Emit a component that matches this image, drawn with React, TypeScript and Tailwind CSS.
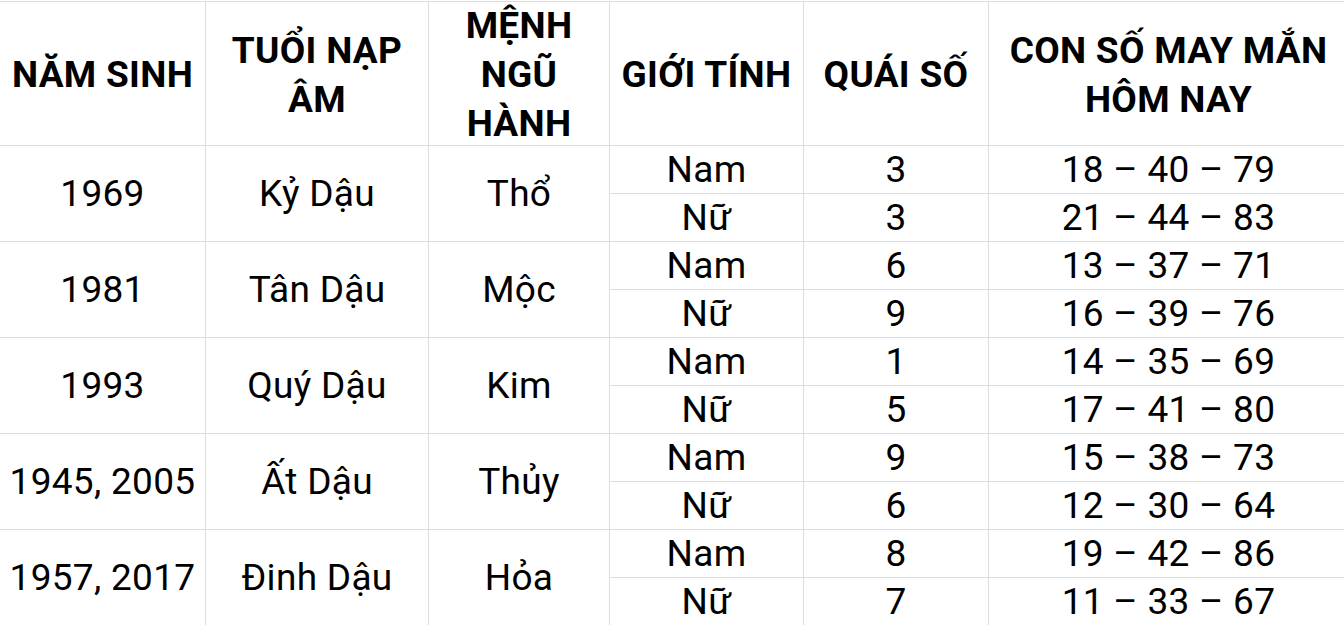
import React from 'react';

type Group = {
  year: string;
  tuoi: string;
  menh: string;
  rows: { gender: string; quai: string; lucky: string }[];
};

const groups: Group[] = [
  {
    year: '1969',
    tuoi: 'Kỷ Dậu',
    menh: 'Thổ',
    rows: [
      { gender: 'Nam', quai: '3', lucky: '18 – 40 – 79' },
      { gender: 'Nữ', quai: '3', lucky: '21 – 44 – 83' },
    ],
  },
  {
    year: '1981',
    tuoi: 'Tân Dậu',
    menh: 'Mộc',
    rows: [
      { gender: 'Nam', quai: '6', lucky: '13 – 37 – 71' },
      { gender: 'Nữ', quai: '9', lucky: '16 – 39 – 76' },
    ],
  },
  {
    year: '1993',
    tuoi: 'Quý Dậu',
    menh: 'Kim',
    rows: [
      { gender: 'Nam', quai: '1', lucky: '14 – 35 – 69' },
      { gender: 'Nữ', quai: '5', lucky: '17 – 41 – 80' },
    ],
  },
  {
    year: '1945, 2005',
    tuoi: 'Ất Dậu',
    menh: 'Thủy',
    rows: [
      { gender: 'Nam', quai: '9', lucky: '15 – 38 – 73' },
      { gender: 'Nữ', quai: '6', lucky: '12 – 30 – 64' },
    ],
  },
  {
    year: '1957, 2017',
    tuoi: 'Đinh Dậu',
    menh: 'Hỏa',
    rows: [
      { gender: 'Nam', quai: '8', lucky: '19 – 42 – 86' },
      { gender: 'Nữ', quai: '7', lucky: '11 – 33 – 67' },
    ],
  },
];

const headers: { label: string[]; w: string }[] = [
  { label: ['NĂM SINH'], w: 'w-[206px]' },
  { label: ['TUỔI NẠP', 'ÂM'], w: 'w-[223px]' },
  { label: ['MỆNH', 'NGŨ', 'HÀNH'], w: 'w-[181px]' },
  { label: ['GIỚI TÍNH'], w: 'w-[194px]' },
  { label: ['QUÁI SỐ'], w: 'w-[185px]' },
  { label: ['CON SỐ MAY MẮN', 'HÔM NAY'], w: 'w-[360px]' },
];

const cell = 'border-r border-b border-[#dddddd] text-center align-middle p-0 h-[48px] leading-[47px] whitespace-nowrap';

export default function App() {
  return (
    <div className="w-[1344px] h-[625px] overflow-hidden bg-white pt-px" style={{ fontFamily: 'Roboto, "Noto Sans", sans-serif' }}>
      <table className="ml-[-1px] table-fixed border-separate border-spacing-0 border-l border-t border-[#dddddd] w-[1350px] text-black text-[37px] tracking-[0.3px]">
        <thead>
          <tr>
            {headers.map(h => (
              <th key={h.label.join(' ')} className={`${h.w} h-[144px] p-0 border-r border-b border-[#dddddd] font-bold`}>
                <div className="h-[143px] pt-[2px] flex flex-col items-center justify-center leading-[49px] whitespace-nowrap">
                  {h.label.map(l => (
                    <span key={l}>{l}</span>
                  ))}
                </div>
              </th>
            ))}
          </tr>
        </thead>
        <tbody>
          {groups.map(g =>
            g.rows.map((r, i) => (
              <tr key={g.year + r.gender}>
                {i === 0 && (
                  <>
                    <td rowSpan={2} className={cell}>{g.year}</td>
                    <td rowSpan={2} className={cell}>{g.tuoi}</td>
                    <td rowSpan={2} className={cell}>{g.menh}</td>
                  </>
                )}
                <td className={cell}>{r.gender}</td>
                <td className={cell}>{r.quai}</td>
                <td className={cell}>{r.lucky}</td>
              </tr>
            ))
          )}
        </tbody>
      </table>
    </div>
  );
}
